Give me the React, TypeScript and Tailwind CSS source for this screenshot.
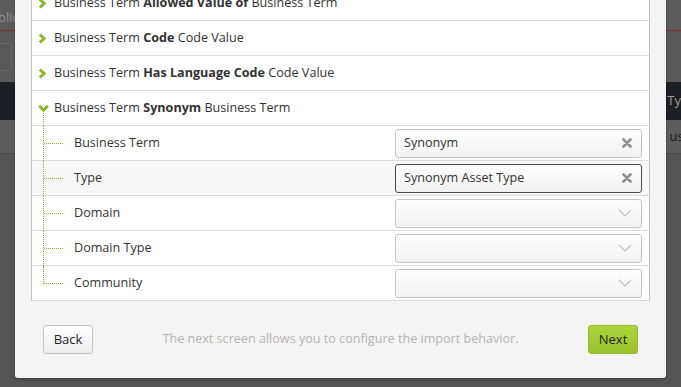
import type { ReactNode } from "react";

const FONT = { fontFamily: '"Open Sans", "DejaVu Sans", sans-serif' };

function ChevronRight() {
  return (
    <svg width="9" height="11" viewBox="0 0 9 11" className="shrink-0">
      <polyline points="1.8,1.5 6.2,5.5 1.8,9.5" fill="none" stroke="#8cb72b" strokeWidth="3" />
    </svg>
  );
}

function ChevronDown() {
  return (
    <svg width="11" height="9" viewBox="0 0 11 9" className="shrink-0">
      <polyline points="1.2,1.8 5.5,6.2 9.8,1.8" fill="none" stroke="#8cb72b" strokeWidth="3" />
    </svg>
  );
}

function ClearIcon() {
  return (
    <svg width="10" height="10" viewBox="0 0 10 10">
      <path d="M1.5 1.5 L8.5 8.5 M8.5 1.5 L1.5 8.5" stroke="#8d8d8d" strokeWidth="2.6" strokeLinecap="round" />
    </svg>
  );
}

function DropIcon() {
  return (
    <svg width="14" height="8" viewBox="0 0 14 8">
      <polyline points="1,1 7,7 13,1" fill="none" stroke="#bdbdbd" strokeWidth="1.1" />
    </svg>
  );
}

function Header({ open, children }: { open?: boolean; children: ReactNode }) {
  return (
    <div className="relative flex h-[35px] items-center border-b border-[#dcdcdc] pl-[6px]">
      <div className="flex w-[16px] justify-start">{open ? <ChevronDown /> : <ChevronRight />}</div>
      <span className="text-[12.6px] text-[#333]">{children}</span>
      {open && (
        <span className="absolute left-[11px] top-[22px] bottom-[-1px] border-l border-dotted border-[#8cb72b]" />
      )}
    </div>
  );
}

function Field({
  label,
  value,
  focused,
  shaded,
  last,
}: {
  label: string;
  value?: string;
  focused?: boolean;
  shaded?: boolean;
  last?: boolean;
}) {
  return (
    <div
      className={`relative flex h-[35px] items-center border-b border-[#dcdcdc] pr-[7px] ${
        shaded ? "bg-[#f7f7f7]" : "bg-white"
      }`}
    >
      <span
        className={`absolute left-[11px] top-0 border-l border-dotted border-[#8cb72b] ${
          last ? "h-[18px]" : "bottom-[-1px]"
        }`}
      />
      <span className="absolute left-[12px] top-[17px] w-[19px] border-t border-dotted border-[#8cb72b]" />
      <span className="pl-[42px] text-[12.6px] text-[#333]">{label}</span>
      <div
        className={`ml-auto flex h-[29px] w-[247px] items-center rounded-[3px] border bg-gradient-to-b from-white to-[#f1f1f1] pl-[8px] pr-[9px] ${
          focused ? "border-[#4a4a4a]" : "border-[#c6c6c6]"
        }`}
      >
        <span className="text-[12.6px] text-[#333]">{value}</span>
        <span className="ml-auto flex items-center">{value ? <ClearIcon /> : <DropIcon />}</span>
      </div>
    </div>
  );
}

export default function App() {
  return (
    <div className="relative h-[387px] w-[681px] overflow-hidden bg-[#545454]" style={FONT}>
      {/* page behind the dialog */}
      <div className="flex flex-col">
        <div className="flex h-[30px] items-end bg-[#5b5b5b] pb-[3px]">
          <span className="ml-[-10px] text-[13px] text-[#8e8e8e]">ublic</span>
        </div>
        <div className="h-px bg-[#7c2e2e]" />
        <div className="flex h-[51px] items-center bg-[#595959]">
          <div className="ml-[-10px] h-[28px] w-[22px] rounded-[3px] border border-[#6b6b6b]" />
        </div>
        <div className="flex h-[38px] items-center justify-end bg-[#1c1f24]">
          <span className="mr-[-8px] text-[13px] text-[#9a9a9a]">Typ</span>
        </div>
        <div className="flex h-[34px] items-center justify-end border-b border-[#4a4a4a] bg-[#5c5c5c]">
          <span className="mr-[-6px] text-[13px] text-[#1e1e1e]">usi</span>
        </div>
      </div>

      {/* dialog */}
      <div className="absolute left-[15px] top-[-31px] flex w-[651px] flex-col rounded-b-[3px] bg-[#f4f4f4] pt-[17px] shadow-[0_1px_2px_rgba(0,0,0,0.3)]">
        <div className="mx-4 border-x border-[#c4c4c4] bg-white">
          <Header>
            Business Term <b>Allowed Value of</b> Business Term
          </Header>
          <Header>
            Business Term <b>Code</b> Code Value
          </Header>
          <Header>
            Business Term <b>Has Language Code</b> Code Value
          </Header>
          <Header open>
            Business Term <b>Synonym</b> Business Term
          </Header>
          <Field label="Business Term" value="Synonym" />
          <Field label="Type" value="Synonym Asset Type" focused shaded />
          <Field label="Domain" />
          <Field label="Domain Type" />
          <Field label="Community" last />
        </div>

        <div className="flex h-[77px] items-center px-[28px]">
          <button className="h-[29px] w-[50px] rounded-[3px] border border-[#c4c4c4] bg-gradient-to-b from-white to-[#ececec] text-[13px] text-[#222]">
            Back
          </button>
          <span className="flex-1 text-center text-[12.6px] text-[#b4b4b4]">
            The next screen allows you to configure the import behavior.
          </span>
          <button className="h-[29px] w-[50px] rounded-[3px] border border-[#94ba2c] bg-gradient-to-b from-[#aed33c] to-[#9ac22c] text-[13px] text-[#222]">
            Next
          </button>
        </div>
      </div>
    </div>
  );
}
